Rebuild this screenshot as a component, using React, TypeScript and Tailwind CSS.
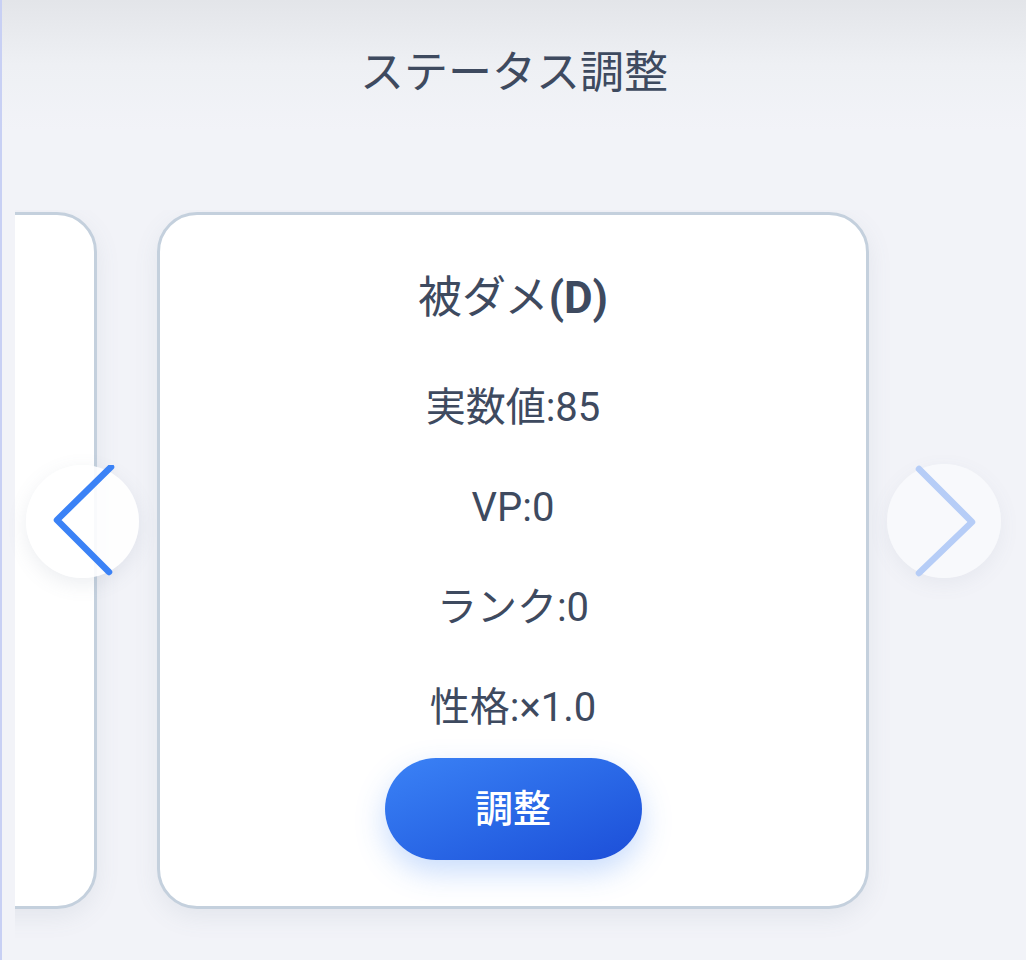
import React from "react";

const font = { fontFamily: "Roboto, 'Noto Sans CJK JP', sans-serif" };

function Card({ children, className = "" }: { children?: React.ReactNode; className?: string }) {
  return (
    <div
      className={`shrink-0 w-[712px] h-[697px] bg-white rounded-[40px] border-[3px] border-[#c4d0dd] shadow-[0_8px_24px_rgba(100,116,139,0.10)] ${className}`}
    >
      {children}
    </div>
  );
}

export default function App() {
  return (
    <div
      className="relative w-[1026px] h-[960px] overflow-hidden bg-[#f2f3f8] border-l-2 border-[#c8d0f4] text-[#3e4a5f]"
      style={font}
    >
      <div className="absolute inset-x-0 top-0 h-[130px] bg-gradient-to-b from-[#e3e5e9] via-[#eef0f4] to-[#f2f3f8]" />
      <div className="relative flex flex-col">
        <h1 className="h-[144px] flex items-center justify-center text-[44px] font-normal pt-[2px]">
          ステータス調整
        </h1>
        <div className="mt-[66px] ml-[13px] w-[996px] h-[740px] overflow-hidden">
          <div className="flex gap-[60px] ml-[-630px] pt-[2px]">
            <Card />
            <Card className="flex flex-col items-center">
              <div className="mt-[53px] h-[60px] flex items-center text-[44px] leading-none">
                <span className="font-normal">被ダメ</span>
                <span className="font-bold">(D)</span>
              </div>
              <div className="mt-[30px] flex flex-col items-center text-[40px]">
                <div className="h-[100px] flex items-center">実数値:85</div>
                <div className="h-[100px] flex items-center">VP:0</div>
                <div className="h-[100px] flex items-center">ランク:0</div>
                <div className="h-[100px] flex items-center">性格:×1.0</div>
              </div>
              <button className="w-[257px] h-[102px] rounded-full bg-gradient-to-br from-[#3b82f6] to-[#1d4ed8] text-white text-[38px] font-medium shadow-[0_12px_30px_rgba(59,130,246,0.28)] flex items-center justify-center">
                調整
              </button>
            </Card>
          </div>
        </div>
      </div>

      <div className="absolute left-[24px] top-[465px] w-[113px] h-[113px] rounded-full bg-white/90 shadow-[0_6px_20px_rgba(100,116,139,0.12)]">
        <svg width="113" height="113" viewBox="0 0 113 113" className="absolute inset-0">
          <polyline points="85,2 31,55 83,107" fill="none" stroke="#3b82f6" strokeWidth="6.5" strokeLinecap="round" strokeLinejoin="round" />
        </svg>
      </div>

      <div className="absolute left-[885px] top-[464px] w-[114px] h-[114px] rounded-full bg-[#f8f9fc]/90 shadow-[0_6px_20px_rgba(100,116,139,0.08)]">
        <svg width="114" height="114" viewBox="0 0 114 114" className="absolute inset-0">
          <polyline points="32,5 85,58 32,109" fill="none" stroke="#b6cdf7" strokeWidth="6.5" strokeLinecap="round" strokeLinejoin="round" />
        </svg>
      </div>
    </div>
  );
}
